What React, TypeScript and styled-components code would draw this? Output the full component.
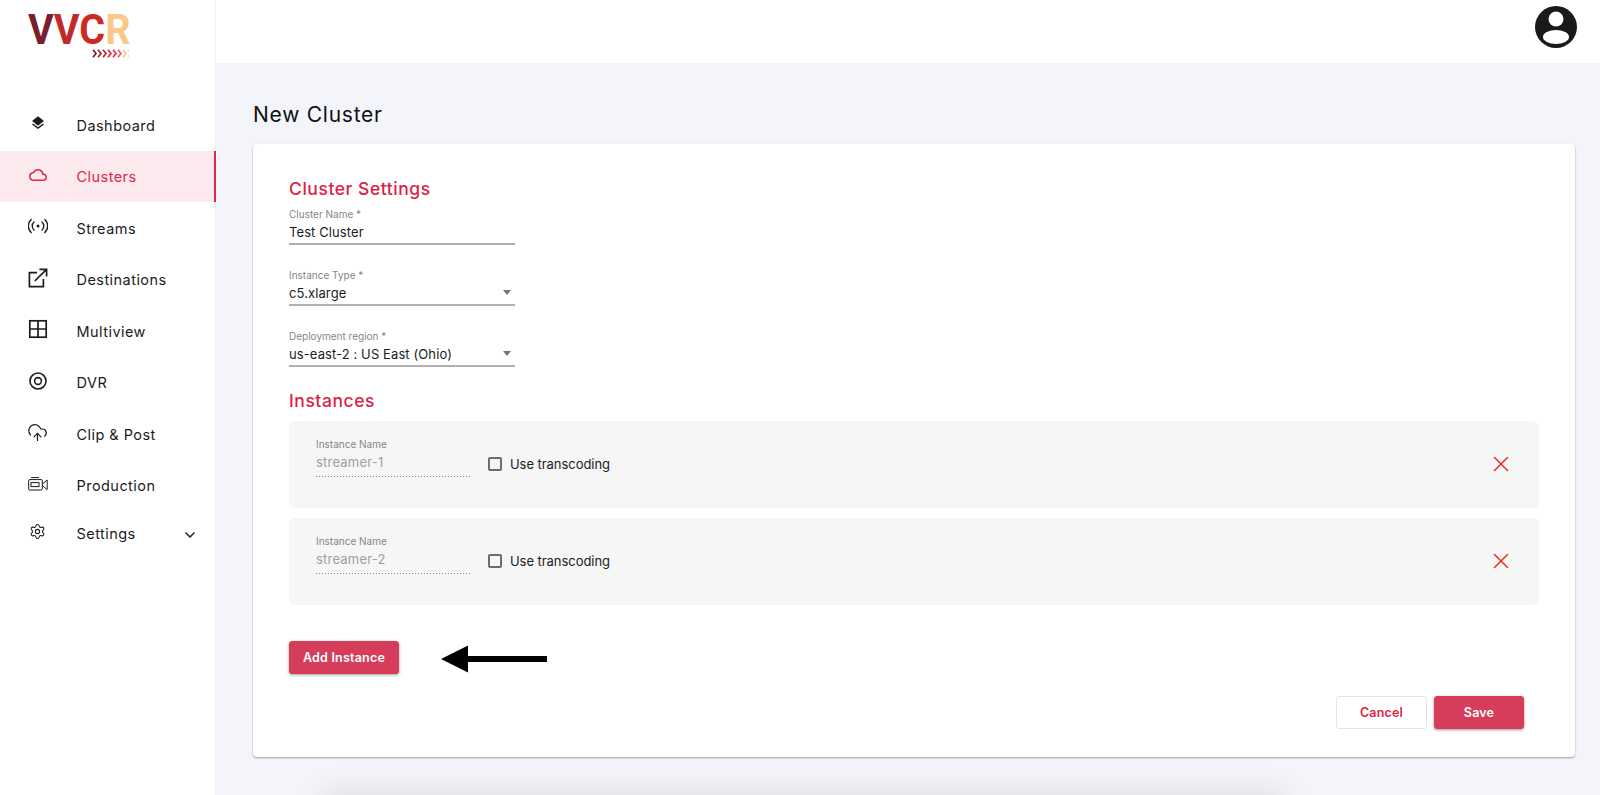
import * as React from 'react';
import styled, { createGlobalStyle } from 'styled-components';
import { ChevronDown, CloudUpload, Settings, X } from 'lucide-react';
import { MdLayers, MdOutlineCloud } from 'react-icons/md';

const GlobalStyle = createGlobalStyle`
  html, body {
    margin: 0;
    padding: 0;
    background: #f4f5fa;
    overflow: hidden;
  }

  * {
    box-sizing: border-box;
  }
`;

const Page = styled.div`
  display: flex;
  height: 100vh;
  overflow: hidden;
  font-family: Inter, 'Noto Sans', sans-serif;
  color: #1c1c1c;
`;

const Sidebar = styled.aside`
  width: 216px;
  flex-shrink: 0;
  background: #fff;
  border-right: 1px solid #f0f0f4;
`;

const LogoBlock = styled.div`
  height: 99px;
  padding: 6px 0 0 28px;
`;

const LogoText = styled.div`
  font-family: Roboto, sans-serif;
  font-weight: 700;
  font-size: 42px;
  line-height: 48px;
  height: 43px;
  transform: scaleX(0.94);
  transform-origin: left center;
`;

const LogoLetter = styled.span<{ $color: string }>`
  color: ${(props) => props.$color};
`;

const LogoArrows = styled.svg`
  display: block;
  margin-left: 64px;
`;

const NavItem = styled.div<{ $active?: boolean, $short?: boolean }>`
  display: flex;
  align-items: center;
  height: ${(props) => (props.$short ? '44px' : '51.5px')};
  padding-right: 16px;
  background: ${(props) => (props.$active ? '#fbe9ed' : 'transparent')};
  border-right: 2px solid ${(props) => (props.$active ? '#e0264a' : 'transparent')};
  color: ${(props) => (props.$active ? '#e0264a' : '#1c1c1c')};
  margin-right: -1px;
`;

const NavIcon = styled.span`
  width: 76.5px;
  flex-shrink: 0;
  margin-bottom: 3px;
  display: flex;
  justify-content: center;

  & > svg {
    display: block;
    margin-right: 1px;
  }
`;

const NavLabel = styled.span`
  flex: 1;
  padding-top: 1px;
  font-size: 14.5px;
  letter-spacing: 0.45px;
`;

const NavChevron = styled(ChevronDown)`
  margin-top: 4px;
`;

const Main = styled.main`
  position: relative;
  flex: 1;
  min-width: 0;
  overflow: hidden;

  &::after {
    content: '';
    position: absolute;
    left: 125px;
    right: 335px;
    top: 812px;
    height: 80px;
    box-shadow: 0 0 30px 18px rgba(0, 0, 0, 0.11);
  }
`;

const TopBar = styled.header`
  height: 63px;
  background: #fff;
  display: flex;
  justify-content: flex-end;
  padding: 6px 23px 0 0;
`;

const Content = styled.div`
  padding: 38px 25px 0 37px;
`;

const Title = styled.h1`
  margin: 0 0 15px;
  font-size: 21px;
  line-height: 28px;
  font-weight: 400;
  letter-spacing: 0.75px;
  color: #111;
`;

const Card = styled.section`
  background: #fff;
  border-radius: 4px;
  height: 613px;
  padding: 33px 36px 28px;
  box-shadow: 0 1px 2px rgba(0, 0, 0, 0.38);
`;

const SectionTitle = styled.h2<{ $gap: number }>`
  margin: 0 0 ${(props) => props.$gap}px;
  font-size: 17.5px;
  line-height: 24px;
  font-weight: 500;
  letter-spacing: 0.55px;
  color: #dc1f47;
`;

const Field = styled.div`
  width: 226px;
  margin-bottom: 22px;
`;

const FieldLabel = styled.div<{ $tall?: boolean }>`
  font-size: 10px;
  line-height: ${(props) => (props.$tall ? '16px' : '14px')};
  color: #868686;
`;

const FieldValue = styled.div`
  display: flex;
  align-items: center;
  justify-content: space-between;
  height: 23px;
  padding: 0 4px 2px 0;
  font-size: 13px;
  letter-spacing: 0.1px;
  border-bottom: 2px solid #b0b0b0;
  color: #1c1c1c;
`;

const Caret = styled.span`
  width: 0;
  height: 0;
  border-left: 4px solid transparent;
  border-right: 4px solid transparent;
  border-top: 5px solid #757575;
`;

const InstanceBox = styled.div`
  display: flex;
  align-items: flex-start;
  height: 87px;
  margin-bottom: 10px;
  padding: 16px 25px 0 27px;
  border-radius: 6px;
  background: #f6f6f6;
`;

const InstanceField = styled.div`
  width: 154px;
  margin-right: 18px;
`;

const InstanceValue = styled.div`
  height: 26px;
  font-size: 13px;
  line-height: 22px;
  letter-spacing: 0.2px;
  color: #a0a0a0;
  background: linear-gradient(to right, #8a8a8a 1.5px, transparent 1.5px) left bottom / 3px 1px repeat-x;
`;

const CheckRow = styled.label`
  flex: 1;
  display: flex;
  align-items: center;
  gap: 8px;
  height: 16px;
  margin-top: 19px;
  font-size: 13px;
  letter-spacing: -0.05px;
`;

const CheckBox = styled.span`
  width: 14px;
  height: 14px;
  border: 2px solid #6c6c6c;
  border-radius: 2px;
`;

const RemoveIcon = styled(X)`
  display: block;
  margin-top: 14px;
  color: #ea3323;
`;

const AddRow = styled.div`
  display: flex;
  align-items: center;
  gap: 42px;
  margin-top: 36px;
`;

const PointerArrow = styled.svg`
  margin-top: 2px;
`;

const Button = styled.button<{ $outline?: boolean, $wide?: number }>`
  height: 33px;
  width: ${(props) => props.$wide}px;
  padding: 0;
  border-radius: 3px;
  border: 1px solid ${(props) => (props.$outline ? '#e4e4e8' : '#d63d5a')};
  background: ${(props) => (props.$outline ? '#fff' : '#d63d5a')};
  color: ${(props) => (props.$outline ? '#dc1f47' : '#fff')};
  font-family: Inter, sans-serif;
  font-size: 12.5px;
  font-weight: 600;
  letter-spacing: 0.2px;
  box-shadow: ${(props) => (props.$outline ? 'none' : '0 1px 3px rgba(0, 0, 0, 0.4)')};
`;

const Footer = styled.div`
  display: flex;
  justify-content: flex-end;
  gap: 7px;
  margin-top: 22px;
  padding-right: 15px;
`;

const navItems = [
  { label: 'Dashboard', icon: <MdLayers size={16} /> },
  { label: 'Clusters', icon: <MdOutlineCloud size={18} />, active: true },
  {
    label: 'Streams',
    icon: (
      <svg width="20" height="16" viewBox="0 0 20 16" fill="none" stroke="currentColor" strokeWidth="1.4" strokeLinecap="round">
        <path d="M3.2 1.4a9 9 0 000 13.2M6 4a5.4 5.4 0 000 8M16.8 1.4a9 9 0 010 13.2M14 4a5.4 5.4 0 010 8" />
        <circle cx="10" cy="8" r="1.5" fill="currentColor" stroke="none" />
      </svg>
    ),
  },
  {
    label: 'Destinations',
    icon: (
      <svg width="20" height="20" viewBox="0 0 20 20" fill="none" stroke="currentColor" strokeWidth="1.7">
        <path d="M9 4.6H1.4v14h14V11" />
        <path d="M6.8 13L18 1.8M11.4 1.4h7.2v7.2" />
      </svg>
    ),
  },
  {
    label: 'Multiview',
    icon: (
      <svg width="20" height="20" viewBox="0 0 20 20" fill="none" stroke="currentColor" strokeWidth="1.7">
        <rect x="1.8" y="1.8" width="16.4" height="16.4" />
        <path d="M10 2v16M2 10h16" />
      </svg>
    ),
  },
  {
    label: 'DVR',
    icon: (
      <svg width="20" height="20" viewBox="0 0 20 20" fill="none" stroke="currentColor" strokeWidth="1.6">
        <circle cx="10" cy="10" r="8" />
        <circle cx="10" cy="10" r="3.4" />
      </svg>
    ),
  },
  { label: 'Clip & Post', icon: <CloudUpload size={21} strokeWidth={1.4} /> },
  {
    label: 'Production',
    icon: (
      <svg width="20" height="14" viewBox="0 0 20 14" fill="none" stroke="currentColor" strokeWidth="1">
        <rect x="0.7" y="2.6" width="13.6" height="10.4" rx="1" />
        <path d="M3 .6h8M14.4 7l4.8-4v9.6l-4.8-4" />
        <rect x="3" y="5.6" width="8" height="4" />
      </svg>
    ),
  },
];

const arrowColors = ['#7b1e2e', '#a3202c', '#c9242c', '#e0264a', '#ee2a5b', '#f2557a', '#f9c98c', '#fbdca5'];

const Logo = () => (
  <LogoBlock>
    <LogoText>
      <LogoLetter $color="#7b1e2e">V</LogoLetter>
      <LogoLetter $color="#c22a2a">V</LogoLetter>
      <LogoLetter $color="#cf2a22">C</LogoLetter>
      <LogoLetter $color="#f7c98b">R</LogoLetter>
    </LogoText>
    <LogoArrows width="37" height="9" viewBox="0 0 37 9" fill="none" strokeWidth="1.7">
      {arrowColors.map((color, i) => (
        <path key={color} d={`M${i * 5 + 1} .8l3 3.7-3 3.7`} stroke={color} />
      ))}
    </LogoArrows>
  </LogoBlock>
);

const Instance = ({ name }: { name: string }) => (
  <InstanceBox>
    <InstanceField>
      <FieldLabel>Instance Name</FieldLabel>
      <InstanceValue>{name}</InstanceValue>
    </InstanceField>
    <CheckRow>
      <CheckBox />
      Use transcoding
    </CheckRow>
    <RemoveIcon size={26} strokeWidth={1.5} />
  </InstanceBox>
);

const App = () => (
  <Page>
    <GlobalStyle />
    <Sidebar>
      <Logo />
      <nav>
        {navItems.map((item) => (
          <NavItem key={item.label} $active={item.active}>
            <NavIcon>{item.icon}</NavIcon>
            <NavLabel>{item.label}</NavLabel>
          </NavItem>
        ))}
        <NavItem $short>
          <NavIcon><Settings size={17} strokeWidth={1.5} /></NavIcon>
          <NavLabel>Settings</NavLabel>
          <NavChevron size={16} strokeWidth={2.2} />
        </NavItem>
      </nav>
    </Sidebar>
    <Main>
      <TopBar>
        <svg width="42" height="42" viewBox="0 0 42 42">
          <circle cx="21" cy="21" r="21" fill="#1a1a1a" />
          <circle cx="21" cy="13" r="7.5" fill="#fff" />
          <ellipse cx="21" cy="31" rx="13" ry="7" fill="#fff" />
        </svg>
      </TopBar>
      <Content>
        <Title>New Cluster</Title>
        <Card>
          <SectionTitle $gap={5}>Cluster Settings</SectionTitle>
          <Field>
            <FieldLabel $tall>Cluster Name *</FieldLabel>
            <FieldValue>Test Cluster</FieldValue>
          </Field>
          <Field>
            <FieldLabel $tall>Instance Type *</FieldLabel>
            <FieldValue>
              c5.xlarge
              <Caret />
            </FieldValue>
          </Field>
          <Field>
            <FieldLabel $tall>Deployment region *</FieldLabel>
            <FieldValue>
              us-east-2 : US East (Ohio)
              <Caret />
            </FieldValue>
          </Field>
          <SectionTitle $gap={8}>Instances</SectionTitle>
          <Instance name="streamer-1" />
          <Instance name="streamer-2" />
          <AddRow>
            <Button $wide={110}>Add Instance</Button>
            <PointerArrow width="106" height="28" viewBox="0 0 106 28">
              <path d="M0 14L27 0.5V11H106V17H27V27.5Z" fill="#000" />
            </PointerArrow>
          </AddRow>
          <Footer>
            <Button $outline $wide={91}>Cancel</Button>
            <Button $wide={90}>Save</Button>
          </Footer>
        </Card>
      </Content>
    </Main>
  </Page>
);

export default App;
